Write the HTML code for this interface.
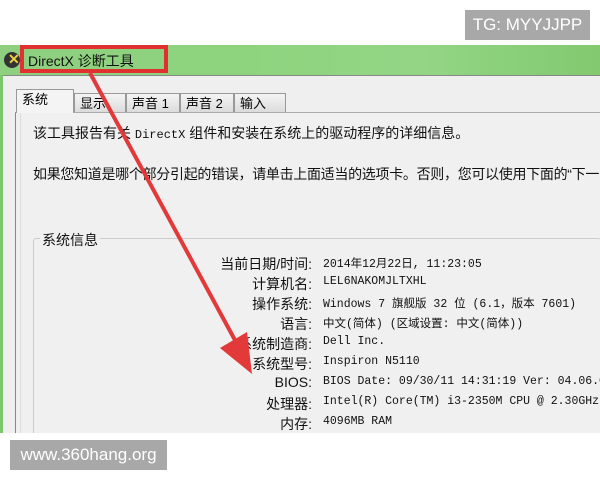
<!DOCTYPE html>
<html><head><meta charset="utf-8"><style>
body{margin:0;width:600px;height:480px;position:relative;overflow:hidden;background:#fff;font-family:"Liberation Sans","Noto Sans CJK SC",sans-serif;}
.abs{position:absolute}
.cn{font-family:"Liberation Sans","Noto Sans CJK SC",sans-serif;font-size:14px;color:#111;white-space:nowrap}
.row{position:absolute;left:0;width:600px;height:20px;font-size:14px;white-space:nowrap;color:#111}
.row .l{position:absolute;right:288px;text-align:right}
.row .v{position:absolute;left:323px;font-family:"Liberation Mono","Noto Sans CJK SC",monospace;font-size:11.5px;top:1px}
.tab{position:absolute;top:93px;height:19px;background:linear-gradient(#f4f4f4,#dcdcdc);border:1px solid #999;border-bottom:none;font-size:13px;line-height:19px;padding-left:5px;box-sizing:border-box}
</style></head><body>
<div class="abs" style="left:465px;top:10px;width:125px;height:30px;background:#a8a8a8;color:#fff;font-size:17px;line-height:30px;text-align:center">TG: MYYJJPP</div>
<div class="abs" style="left:0;top:45px;width:600px;height:30px;background:linear-gradient(90deg,#8fcf80,#8ed47e 40%,#93d585 70%,#82c96f)"></div>
<div class="abs" style="left:0;top:75px;width:600px;height:358px;background:#efefef;border-top:1px solid #888"></div>
<div class="abs" style="left:0;top:75px;width:3px;height:358px;background:#7cc66c"></div>
<div class="abs" style="left:15px;top:112px;width:585px;height:321px;border-left:1px solid #888;border-top:1px solid #aaa;background:#f0f0f0"></div>
<div class="abs" style="left:20px;top:112px;width:1px;height:321px;background:#ddd"></div>
<div class="abs" style="left:4px;top:52px;width:16px;height:16px;border-radius:50%;background:#333"></div>
<div class="abs" style="left:8px;top:51px;font-size:14px;color:#e8d040;font-weight:bold">✕</div>
<div class="abs cn" style="left:28px;top:51px;font-size:14px">DirectX 诊断工具</div>
<div class="abs" style="left:20px;top:45px;width:148px;height:28px;border:4px solid #e03030;box-sizing:border-box"></div>
<div class="tab" style="left:16px;top:89px;width:58px;height:24px;background:#f4f4f4;z-index:2">系统</div>
<div class="tab" style="left:74px;width:52px">显示</div>
<div class="tab" style="left:126px;width:54px">声音 1</div>
<div class="tab" style="left:180px;width:54px">声音 2</div>
<div class="tab" style="left:234px;width:52px">输入</div>
<div class="abs cn" style="left:33px;top:123px">该工具报告有关 <span style="font-family:'Liberation Mono';font-size:12px">DirectX</span> 组件和安装在系统上的驱动程序的详细信息。</div>
<div class="abs cn" style="left:33px;top:164px;letter-spacing:-0.3px">如果您知道是哪个部分引起的错误，请单击上面适当的选项卡。否则，您可以使用下面的“下一</div>
<div class="abs" style="left:33px;top:238px;width:567px;height:200px;border:1px solid #ccc;border-right:none;border-radius:3px"></div>
<div class="abs cn" style="left:40px;top:230px;background:#f0f0f0;padding:0 2px">系统信息</div>
<div class="row" style="top:254px"><span class="l">当前日期/时间:</span><span class="v">2014年12月22日, 11:23:05</span></div>
<div class="row" style="top:274px"><span class="l">计算机名:</span><span class="v">LEL6NAKOMJLTXHL</span></div>
<div class="row" style="top:294px"><span class="l">操作系统:</span><span class="v">Windows 7 旗舰版 32 位 (6.1，版本 7601)</span></div>
<div class="row" style="top:314px"><span class="l">语言:</span><span class="v">中文(简体) (区域设置: 中文(简体))</span></div>
<div class="row" style="top:334px"><span class="l">系统制造商:</span><span class="v">Dell Inc.</span></div>
<div class="row" style="top:354px"><span class="l">系统型号:</span><span class="v">Inspiron N5110</span></div>
<div class="row" style="top:374px"><span class="l">BIOS:</span><span class="v">BIOS Date: 09/30/11 14:31:19 Ver: 04.06.C</span></div>
<div class="row" style="top:394px"><span class="l">处理器:</span><span class="v">Intel(R) Core(TM) i3-2350M CPU @ 2.30GHz</span></div>
<div class="row" style="top:414px"><span class="l">内存:</span><span class="v">4096MB RAM</span></div>
<div class="abs" style="left:0;top:433px;width:600px;height:47px;background:#fff"></div>
<svg class="abs" style="left:0;top:0" width="600" height="480">
<line x1="90" y1="73" x2="236" y2="342" stroke="#e23a3a" stroke-width="4"/>
<polygon points="252,374 220,348 247,332" fill="#e23a3a"/>
</svg>
<div class="abs" style="left:10px;top:440px;width:157px;height:30px;background:#a8a8a8;color:#fff;font-size:17px;line-height:30px;text-align:center">www.360hang.org</div>
</body></html>
